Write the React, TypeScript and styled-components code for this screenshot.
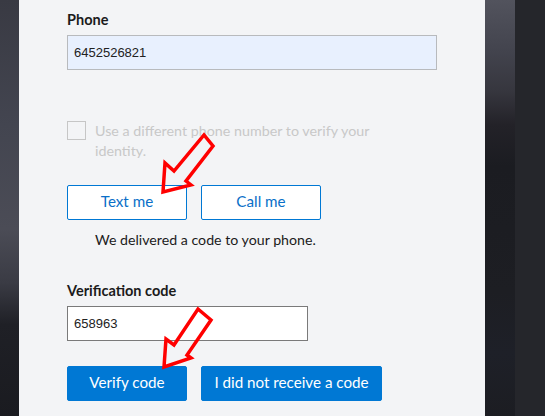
import React from "react";
import styled, { createGlobalStyle } from "styled-components";

const Global = createGlobalStyle`
  html, body { margin: 0; padding: 0; }
  body { width: 545px; height: 416px; overflow: hidden; background: #25262b; font-family: Lato, "Noto Sans", sans-serif; }
`;

const Page = styled.div`
  display: flex;
  width: 545px;
  height: 416px;
`;

const LeftStrip = styled.div`
  width: 19px;
  flex: none;
  background: linear-gradient(180deg, #393a43 0%, #434550 30%, #4b4c56 55%, #3a3b44 68%, #1f2026 78%, #1a1b20 100%);
`;

const RightStrip = styled.div`
  width: 30px;
  flex: none;
  background: linear-gradient(180deg, #52535d 0%, #43444e 12%, #36363e 22%, #232228 30%, #1b1c21 40%, #1d1e23 70%, #1e2028 85%, #1c1d22 100%);
`;

const FarStrip = styled.div`
  width: 30px;
  flex: none;
  background: #25262b;
`;

const Panel = styled.div`
  position: relative;
  width: 466px;
  flex: none;
  background: #f3f4f6;
  padding: 10px 0 0 48px;
  box-sizing: border-box;
  display: flex;
  flex-direction: column;
`;

const Label = styled.div<{ $mt?: number }>`
  font-size: 14.5px;
  font-weight: 700;
  line-height: 20px;
  color: #1b1b1b;
  margin-top: ${(p) => p.$mt ?? 0}px;
`;

const Input = styled.div<{ $w: number; $bg: string; $border: string }>`
  margin-top: 5px;
  width: ${(p) => p.$w}px;
  height: 35px;
  box-sizing: border-box;
  background: ${(p) => p.$bg};
  border: 1px solid ${(p) => p.$border};
  padding-left: 6px;
  display: flex;
  align-items: center;
  font-family: "Liberation Sans", sans-serif;
  font-size: 13px;
  color: #222;
`;

const CheckRow = styled.div`
  margin-top: 51px;
  display: flex;
  gap: 9px;
`;

const Box = styled.div`
  width: 19px;
  height: 19px;
  flex: none;
  box-sizing: border-box;
  border: 1px solid #c6c6c6;
  background: #f3f4f6;
`;

const CheckText = styled.div`
  width: 285px;
  font-size: 14.3px;
  line-height: 20px;
  color: #c8c8c8;
`;

const ButtonRow = styled.div<{ $mt: number }>`
  display: flex;
  gap: 14px;
  margin-top: ${(p) => p.$mt}px;
`;

const Button = styled.div<{ $w: number; $primary?: boolean }>`
  width: ${(p) => p.$w}px;
  height: 35px;
  box-sizing: border-box;
  padding-bottom: 3px;
  border-radius: 2px;
  display: flex;
  align-items: center;
  justify-content: center;
  font-size: 15.2px;
  background: ${(p) => (p.$primary ? "#0078d4" : "#ffffff")};
  color: ${(p) => (p.$primary ? "#ffffff" : "#0a6fc8")};
  border: 1px solid #0078d4;
`;

const Note = styled.div`
  margin-top: 10px;
  margin-left: 28px;
  font-size: 14.2px;
  line-height: 20px;
  color: #1b1b1b;
`;

const Overlay = styled.svg`
  position: absolute;
  left: -19px;
  top: 0;
  width: 545px;
  height: 416px;
  pointer-events: none;
`;

export default function App() {
  return (
    <>
      <Global />
      <Page>
        <LeftStrip />
        <Panel>
          <Label>Phone</Label>
          <Input $w={370} $bg="#e8f0fe" $border="#b8babd">6452526821</Input>
          <CheckRow>
            <Box />
            <CheckText>Use a different phone number to verify your identity.</CheckText>
          </CheckRow>
          <ButtonRow $mt={24}>
            <Button $w={120}>Text me</Button>
            <Button $w={120}>Call me</Button>
          </ButtonRow>
          <Note>We delivered a code to your phone.</Note>
          <Label $mt={31}>Verification code</Label>
          <Input $w={241} $bg="#ffffff" $border="#7a7a7a">658963</Input>
          <ButtonRow $mt={25}>
            <Button $w={120} $primary>Verify code</Button>
            <Button $w={181} $primary>I did not receive a code</Button>
          </ButtonRow>
          <Overlay viewBox="0 0 545 416">
            <polygon
              points="163,192 165,163 174,171 204,135 213,146 186,181 191,185"
              fill="none"
              stroke="#ff0000"
              strokeWidth="3.5"
              strokeLinejoin="miter"
            />
            <polygon
              points="164,367 166,339 174,345 198,309 211,320 187,355 191,358"
              fill="none"
              stroke="#ff0000"
              strokeWidth="3.5"
              strokeLinejoin="miter"
            />
          </Overlay>
        </Panel>
        <RightStrip />
        <FarStrip />
      </Page>
    </>
  );
}
